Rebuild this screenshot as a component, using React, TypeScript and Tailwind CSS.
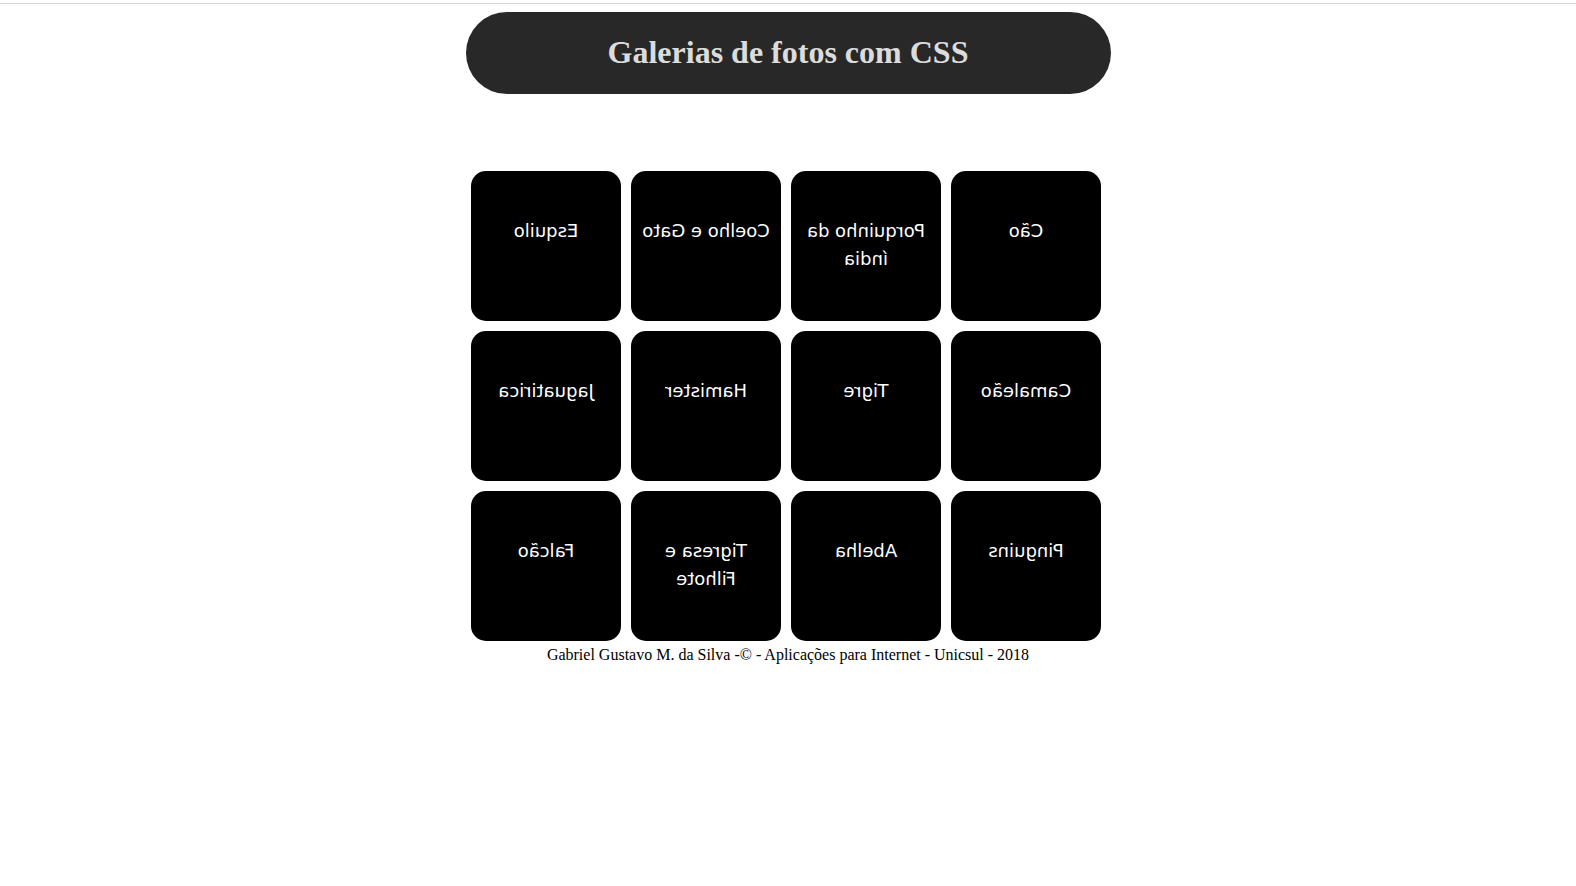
import React from "react";

const fotos = [
  "Esquilo",
  "Coelho e Gato",
  "Porquinho da índia",
  "Cão",
  "Jaguatirica",
  "Hamister",
  "Tigre",
  "Camaleão",
  "Falcão",
  "Tigresa e Filhote",
  "Abelha",
  "Pinguins",
];

const Card = ({ titulo }: { titulo: string }) => {
  return (
    <div className="w-[150px] h-[150px] bg-black rounded-[15px] overflow-hidden pt-[46px] px-[8px]">
      <p
        className="text-white text-center text-[18px] leading-[28px] -scale-x-100"
        style={{ fontFamily: '"DejaVu Sans", Verdana, sans-serif' }}
      >
        {titulo}
      </p>
    </div>
  );
};

export default function App() {
  return (
    <div className="min-h-[886px] bg-white pt-[3px]">
      <div className="border-t border-[#d6d6d6]" />
      <div className="flex justify-center mt-[8px]">
        <div className="w-[645px] h-[82px] rounded-full bg-[#282828] flex items-center justify-center">
          <h1
            className="text-[32px] font-bold text-[#dcdcdc] -mt-[2px]"
            style={{ fontFamily: '"Liberation Serif", "Times New Roman", serif' }}
          >
            Galerias de fotos com CSS
          </h1>
        </div>
      </div>
      <div className="flex justify-center mt-[77px]">
        <div className="grid grid-cols-4 gap-[10px] w-[630px] -translate-x-[2px]">
          {fotos.map((f) => (
            <Card key={f} titulo={f} />
          ))}
        </div>
      </div>
      <p
        className="text-center text-[16px] text-black mt-[5px] leading-[18px]"
        style={{ fontFamily: '"Liberation Serif", "Times New Roman", serif' }}
      >
        Gabriel Gustavo M. da Silva -© - Aplicações para Internet - Unicsul - 2018
      </p>
    </div>
  );
}
